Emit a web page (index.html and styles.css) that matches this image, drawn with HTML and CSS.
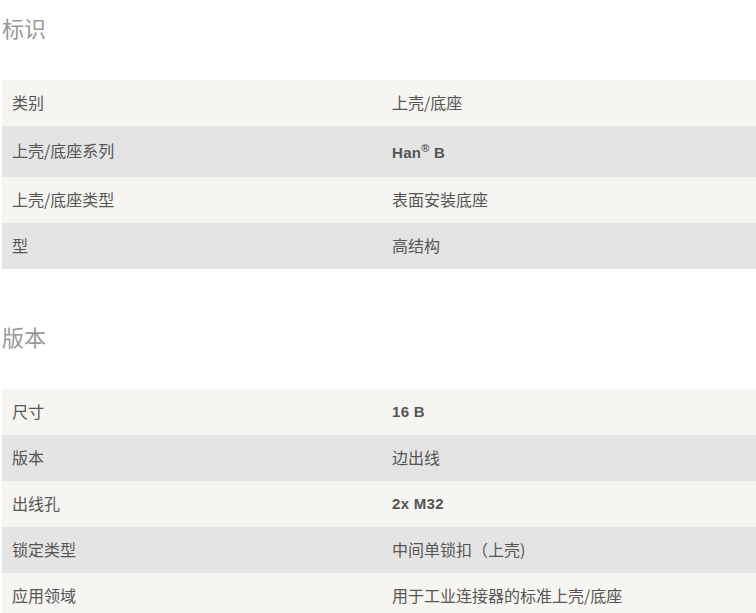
FILE: index.html
```html
<!DOCTYPE html>
<html lang="zh-CN">
<head>
<meta charset="utf-8">
<title>标识</title>
<link rel="stylesheet" href="styles.css">
</head>
<body>
<section class="group">
  <h2 class="group-title">标识</h2>
  <table class="spec">
    <tr class="row row-light"><td class="label">类别</td><td class="value">上壳/底座</td></tr>
    <tr class="row row-dark row-tall"><td class="label">上壳/底座系列</td><td class="value strong">Han<sup class="reg">®</sup> B</td></tr>
    <tr class="row row-light"><td class="label">上壳/底座类型</td><td class="value">表面安装底座</td></tr>
    <tr class="row row-dark"><td class="label">型</td><td class="value">高结构</td></tr>
  </table>
</section>
<section class="group group-next">
  <h2 class="group-title">版本</h2>
  <table class="spec">
    <tr class="row row-light"><td class="label">尺寸</td><td class="value strong">16 B</td></tr>
    <tr class="row row-dark"><td class="label">版本</td><td class="value">边出线</td></tr>
    <tr class="row row-light"><td class="label">出线孔</td><td class="value strong">2x M32</td></tr>
    <tr class="row row-dark"><td class="label">锁定类型</td><td class="value">中间单锁扣（上壳)</td></tr>
    <tr class="row row-light"><td class="label">应用领域</td><td class="value">用于工业连接器的标准上壳/底座</td></tr>
  </table>
</section>
</body>
</html>
```
FILE: styles.css
```css
html, body {
  margin: 0;
  padding: 0;
  background: #ffffff;
  overflow: hidden;
}
body {
  padding-left: 2px;
  font-family: "Noto Sans CJK SC", "Liberation Sans", sans-serif;
  color: #555555;
}
.group-title {
  margin: 12px 0 38px;
  font-size: 22px;
  line-height: 30px;
  font-weight: normal;
  color: #999999;
}
.group-next {
  margin-top: 52px;
}
.spec {
  width: 760px;
  border-collapse: collapse;
  table-layout: fixed;
}
.row td {
  height: 46px;
  padding: 0 10px 3px;
  box-sizing: border-box;
  font-size: 16px;
  line-height: 18px;
  vertical-align: middle;
}
.row-tall td {
  height: 51px;
}
.row-light {
  background: #f6f5f1;
}
.row-dark {
  background: #e4e4e4;
}
.label {
  width: 380px;
}
.row td.strong {
  padding: 0 10px 1px;
  font-family: "Liberation Sans", Arial, sans-serif;
  font-weight: bold;
  font-size: 15px;
  letter-spacing: 0.3px;
}
.row-tall td.strong {
  padding: 2px 10px 0;
}
.reg {
  font-size: 11px;
  line-height: 0;
  vertical-align: 6px;
}
```
